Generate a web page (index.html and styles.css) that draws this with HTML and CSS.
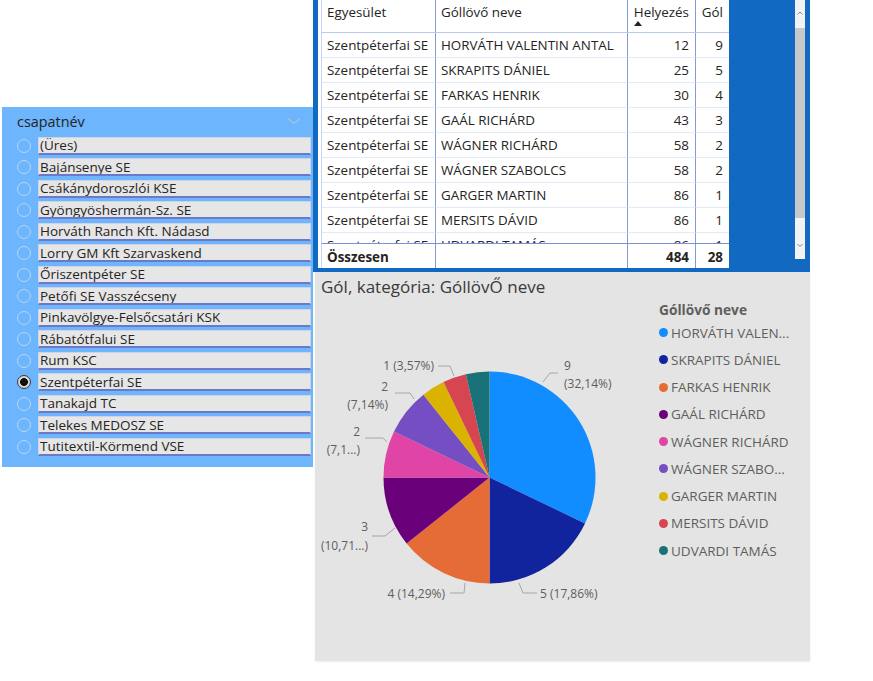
FILE: index.html
```html
<!DOCTYPE html>
<html lang="hu">
<head>
<meta charset="utf-8">
<title>Góllövők</title>
<link rel="stylesheet" href="styles.css">
</head>
<body>
<div class="canvas">

  <section class="visual table-visual">
    <div class="tbl">
      <div class="row head">
        <div class="c c1">Egyesület</div>
        <div class="c c2">Góllövő neve</div>
        <div class="c c3 num"><span>Helyezés</span><span class="sort"></span></div>
        <div class="c c4 num">Gól</div>
      </div>
      <div class="body">
        <div class="row"><div class="c c1">Szentpéterfai SE</div><div class="c c2">HORVÁTH VALENTIN ANTAL</div><div class="c c3 num">12</div><div class="c c4 num">9</div></div>
        <div class="row"><div class="c c1">Szentpéterfai SE</div><div class="c c2">SKRAPITS DÁNIEL</div><div class="c c3 num">25</div><div class="c c4 num">5</div></div>
        <div class="row"><div class="c c1">Szentpéterfai SE</div><div class="c c2">FARKAS HENRIK</div><div class="c c3 num">30</div><div class="c c4 num">4</div></div>
        <div class="row"><div class="c c1">Szentpéterfai SE</div><div class="c c2">GAÁL RICHÁRD</div><div class="c c3 num">43</div><div class="c c4 num">3</div></div>
        <div class="row"><div class="c c1">Szentpéterfai SE</div><div class="c c2">WÁGNER RICHÁRD</div><div class="c c3 num">58</div><div class="c c4 num">2</div></div>
        <div class="row"><div class="c c1">Szentpéterfai SE</div><div class="c c2">WÁGNER SZABOLCS</div><div class="c c3 num">58</div><div class="c c4 num">2</div></div>
        <div class="row"><div class="c c1">Szentpéterfai SE</div><div class="c c2">GARGER MARTIN</div><div class="c c3 num">86</div><div class="c c4 num">1</div></div>
        <div class="row"><div class="c c1">Szentpéterfai SE</div><div class="c c2">MERSITS DÁVID</div><div class="c c3 num">86</div><div class="c c4 num">1</div></div>
        <div class="row"><div class="c c1">Szentpéterfai SE</div><div class="c c2">UDVARDI TAMÁS</div><div class="c c3 num">86</div><div class="c c4 num">1</div></div>
      </div>
      <div class="row total">
        <div class="c c1">Összesen</div>
        <div class="c c2"></div>
        <div class="c c3 num">484</div>
        <div class="c c4 num">28</div>
      </div>
    </div>
    <div class="scrollbar">
      <svg class="arrow" width="10" height="10" viewBox="0 0 10 10"><path d="M2.5 6.5 L5 4 L7.5 6.5" fill="none" stroke="#8a8a8a" stroke-width="1"/></svg>
      <div class="thumb"></div>
      <div class="track"></div>
      <svg class="arrow" width="10" height="10" viewBox="0 0 10 10"><path d="M2.5 4 L5 6.5 L7.5 4" fill="none" stroke="#8a8a8a" stroke-width="1"/></svg>
    </div>
  </section>

  <section class="visual slicer">
    <div class="slicer-head">
      <span>csapatnév</span>
      <svg width="14" height="8" viewBox="0 0 14 8"><path d="M1 1.5 L7 6.5 L13 1.5" fill="none" stroke="#a9c3dc" stroke-width="1.2"/></svg>
    </div>
    <ul class="items">
      <li><span class="radio"></span><span class="box">(Üres)</span></li>
      <li><span class="radio"></span><span class="box">Bajánsenye SE</span></li>
      <li><span class="radio"></span><span class="box">Csákánydoroszlói KSE</span></li>
      <li><span class="radio"></span><span class="box">Gyöngyöshermán-Sz. SE</span></li>
      <li><span class="radio"></span><span class="box">Horváth Ranch Kft. Nádasd</span></li>
      <li><span class="radio"></span><span class="box">Lorry GM Kft Szarvaskend</span></li>
      <li><span class="radio"></span><span class="box">Őriszentpéter SE</span></li>
      <li><span class="radio"></span><span class="box">Petőfi SE Vasszécseny</span></li>
      <li><span class="radio"></span><span class="box">Pinkavölgye-Felsőcsatári KSK</span></li>
      <li><span class="radio"></span><span class="box">Rábatótfalui SE</span></li>
      <li><span class="radio"></span><span class="box">Rum KSC</span></li>
      <li><span class="radio on"></span><span class="box">Szentpéterfai SE</span></li>
      <li><span class="radio"></span><span class="box">Tanakajd TC</span></li>
      <li><span class="radio"></span><span class="box">Telekes MEDOSZ SE</span></li>
      <li><span class="radio"></span><span class="box">Tutitextil-Körmend VSE</span></li>
    </ul>
  </section>

  <section class="visual chart">
    <h2 class="chart-title">Gól, kategória: GóllövŐ neve</h2>
    <div class="chart-body">
      <svg class="pie" width="340" height="340" viewBox="0 0 340 340">
        <g>
          <path d="M174.5 179.5 L174.5 73.5 A106 106 0 0 1 270 225.49 Z" fill="#118DFF"/>
          <path d="M174.5 179.5 L270 225.49 A106 106 0 0 1 174.5 285.5 Z" fill="#12239E"/>
          <path d="M174.5 179.5 L174.5 285.5 A106 106 0 0 1 91.63 245.59 Z" fill="#E66C37"/>
          <path d="M174.5 179.5 L91.63 245.59 A106 106 0 0 1 68.5 179.5 Z" fill="#6B007B"/>
          <path d="M174.5 179.5 L68.5 179.5 A106 106 0 0 1 79 133.51 Z" fill="#E044A7"/>
          <path d="M174.5 179.5 L79 133.51 A106 106 0 0 1 108.41 96.63 Z" fill="#744EC2"/>
          <path d="M174.5 179.5 L108.41 96.63 A106 106 0 0 1 128.51 84 Z" fill="#D9B300"/>
          <path d="M174.5 179.5 L128.51 84 A106 106 0 0 1 150.91 76.16 Z" fill="#D64550"/>
          <path d="M174.5 179.5 L150.91 76.16 A106 106 0 0 1 174.5 73.5 Z" fill="#197278"/>
        </g>
        <g class="leaders">
          <polyline points="228,84 235,75 243,75"/>
          <polyline points="123,68 135,68 139,78"/>
          <polyline points="80,95 95,95 99,101"/>
          <polyline points="50,140 68,140 72,144"/>
          <polyline points="57,238 70,238 80,230"/>
          <polyline points="135,295 149,295 150,285"/>
          <polyline points="204,285 208,295 222,295"/>
        </g>
        <g class="labels">
          <text x="249" y="72">9</text>
          <text x="249" y="90">(32,14%)</text>
          <text x="119" y="72" text-anchor="end">1 (3,57%)</text>
          <text x="73" y="93" text-anchor="end">2</text>
          <text x="73" y="111" text-anchor="end">(7,14%)</text>
          <text x="45" y="138" text-anchor="end">2</text>
          <text x="45" y="156" text-anchor="end">(7,1...)</text>
          <text x="53" y="233" text-anchor="end">3</text>
          <text x="53" y="252" text-anchor="end">(10,71...)</text>
          <text x="130" y="300" text-anchor="end">4 (14,29%)</text>
          <text x="225" y="300">5 (17,86%)</text>
        </g>
      </svg>
      <div class="legend">
        <div class="legend-title">Góllövő neve</div>
        <ul class="legend-items">
          <li><i class="dot d1"></i>HORVÁTH VALEN...</li>
          <li><i class="dot d2"></i>SKRAPITS DÁNIEL</li>
          <li><i class="dot d3"></i>FARKAS HENRIK</li>
          <li><i class="dot d4"></i>GAÁL RICHÁRD</li>
          <li><i class="dot d5"></i>WÁGNER RICHÁRD</li>
          <li><i class="dot d6"></i>WÁGNER SZABO...</li>
          <li><i class="dot d7"></i>GARGER MARTIN</li>
          <li><i class="dot d8"></i>MERSITS DÁVID</li>
          <li><i class="dot d9"></i>UDVARDI TAMÁS</li>
        </ul>
      </div>
    </div>
  </section>

</div>
</body>
</html>
```

FILE: styles.css
```css
* { box-sizing: border-box; }
html, body { margin: 0; padding: 0; background: #ffffff; }
body {
  font-family: "Open Sans", "Noto Sans", "DejaVu Sans", sans-serif;
  color: #252423;
  overflow: hidden;
}
.canvas { position: relative; width: 873px; height: 681px; overflow: hidden; }
.visual { position: absolute; }

/* ---------- table visual ---------- */
.table-visual {
  left: 313px; top: -4px; width: 497px; height: 276px;
  background: #1169c1;
  padding: 4px 0 4px 5px;
  display: flex;
  align-items: flex-start;
}
.tbl {
  width: 411px; height: 268px;
  background: #ffffff;
  padding-left: 3px;
  font-size: 13.4px;
}
.row {
  display: grid;
  grid-template-columns: 114px 192px 68px 34px;
  border-left: 1px solid #c9d6f2;
}
.c {
  padding: 0 6px 0 5px;
  white-space: nowrap;
  overflow: hidden;
  border-right: 1px solid #8797de;
  display: flex; align-items: center;
}
.c4 { border-right: none; padding-right: 7px; }
.num { justify-content: flex-end; }
.head { height: 33px; border-bottom: 1px solid #b9c9ef; }
.head .c { align-items: flex-start; padding-top: 3px; }
.head .c3 { flex-direction: column; align-items: flex-end; justify-content: flex-start; }
.sort {
  align-self: flex-start;
  width: 0; height: 0; margin-left: 1px; margin-top: 0;
  border-left: 4px solid transparent; border-right: 4px solid transparent;
  border-bottom: 5px solid #252423;
}
.body { height: 210px; overflow: hidden; }
.body .row { height: 25px; }
.body .c { border-bottom: 1px solid #e2e9f7; }
.total { height: 25px; border-top: 1px solid #7d8fdc; font-weight: 700; }
.total .c { padding-top: 2px; }

.scrollbar {
  margin-left: 66px; width: 10px; height: 259px;
  background: #f2f2f2;
  display: flex; flex-direction: column; align-items: center;
}
.scrollbar .arrow { flex: none; margin-top: 8px; }
.scrollbar .arrow:last-child { margin-top: 0; margin-bottom: 9px; }
.thumb { width: 10px; height: 190px; margin-top: 10px; background: #c8c8c8; flex: none; }
.track { flex: 1; }

/* ---------- slicer ---------- */
.slicer {
  left: 2px; top: 107px; width: 311px; height: 360px;
  background: #6db5fc;
  padding: 0 2px 0 15px;
}
.slicer-head {
  height: 28px;
  display: flex; align-items: center; justify-content: space-between;
  font-size: 14.4px; color: #252423;
  padding-right: 10px;
}
.items { list-style: none; margin: 0; padding: 0; }
.items li {
  height: 21.5px;
  display: flex; align-items: center;
  font-size: 13.5px;
}
.radio {
  width: 14px; height: 14px; border-radius: 50%;
  border: 1.5px solid #b9d6f4;
  flex: none;
  margin-right: 7px;
}
.radio.on {
  border: 1.5px solid #3a3a3a;
  background: radial-gradient(circle, #111 0 3.6px, #d6d6d6 4.2px);
}
.box {
  flex: 1;
  height: 18px;
  background: #e6e6e6;
  border: 1px solid #cfd3e6;
  border-bottom: 2px solid #6e78c8;
  padding-left: 1px;
  display: flex; align-items: center;
  white-space: nowrap; overflow: hidden;
}

/* ---------- chart ---------- */
.chart {
  left: 315px; top: 272px; width: 495px; height: 389px;
  background: #e4e4e4;
  box-shadow: 0 1px 2px rgba(0,0,0,0.08);
}
.chart-title {
  margin: 0; padding: 5px 0 0 6px;
  height: 26px;
  font-size: 17px; font-weight: 400; line-height: 20px;
  color: #3a3a3a;
}
.chart-body { display: flex; }
.pie { flex: none; display: block; }
.leaders polyline { fill: none; stroke: #a6a6a6; stroke-width: 1; }
.labels text { font-size: 12px; fill: #605e5c; font-family: "Open Sans", "Noto Sans", sans-serif; }

.legend { margin-left: 4px; padding-top: 3px; color: #605e5c; }
.legend-title { font-size: 13.7px; font-weight: 700; line-height: 18px; }
.legend-items { list-style: none; margin: 0; padding: 0; }
.legend-items li {
  height: 27.25px;
  display: flex; align-items: center;
  font-size: 13.5px;
  white-space: nowrap;
}
.dot { width: 9px; height: 9px; border-radius: 50%; margin-right: 3px; flex: none; }
.d1 { background: #118DFF; }
.d2 { background: #12239E; }
.d3 { background: #E66C37; }
.d4 { background: #6B007B; }
.d5 { background: #E044A7; }
.d6 { background: #744EC2; }
.d7 { background: #D9B300; }
.d8 { background: #D64550; }
.d9 { background: #197278; }
```
